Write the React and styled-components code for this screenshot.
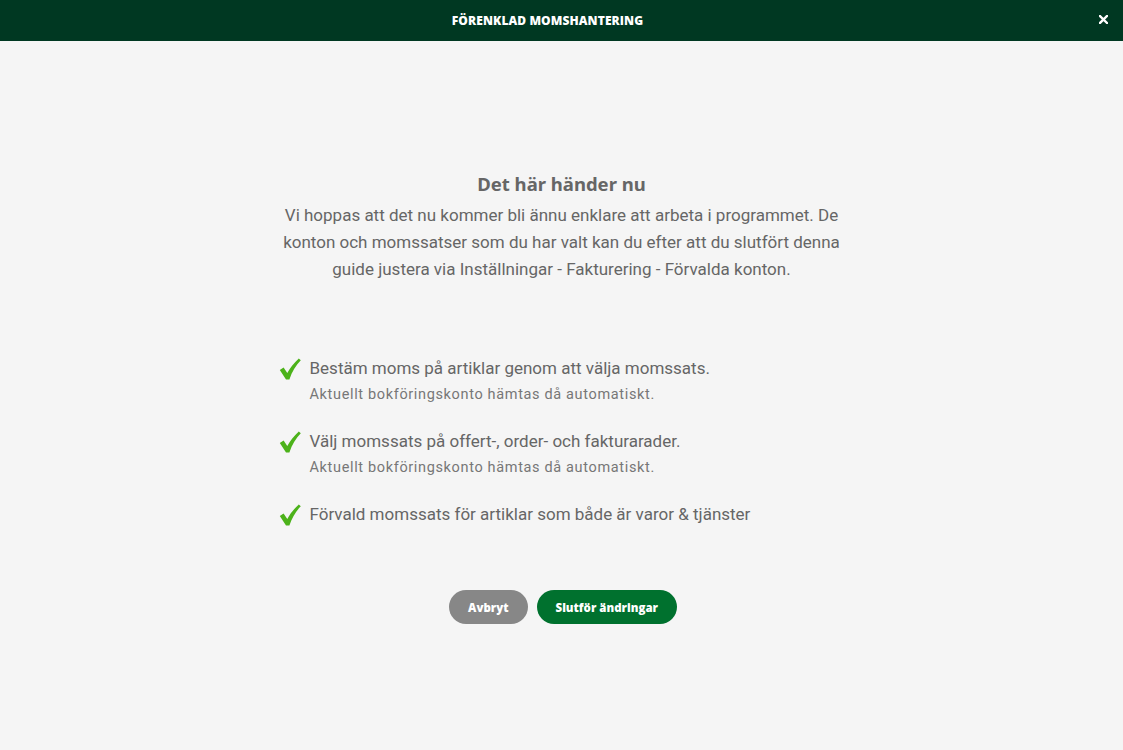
import React from 'react';
import styled, { createGlobalStyle } from 'styled-components';

const GlobalStyle = createGlobalStyle`
  html, body {
    margin: 0;
    padding: 0;
    background: #f5f5f5;
  }
  body {
    font-family: Roboto, "Liberation Sans", Arial, sans-serif;
  }
`;

const Page = styled.div`
  min-height: 750px;
  display: flex;
  flex-direction: column;
  background: #f5f5f5;
`;

const TopBar = styled.header`
  height: 41px;
  background: #003822;
  display: flex;
  align-items: center;
  justify-content: center;
  padding-right: 28px;
  position: relative;
`;

const Title = styled.h1`
  margin: 0;
  color: #fff;
  font-family: "Open Sans", "Noto Sans", sans-serif;
  font-weight: 800;
  font-size: 12px;
  letter-spacing: 0.1px;
  text-transform: uppercase;
`;

const CloseButton = styled.button`
  position: absolute;
  right: 13px;
  top: 12px;
  width: 14px;
  height: 14px;
  padding: 0;
  border: none;
  background: none;
  cursor: pointer;
  display: flex;
  align-items: center;
  justify-content: center;
`;

const Main = styled.main`
  display: flex;
  flex-direction: column;
  align-items: center;
  padding-top: 131px;
`;

const Content = styled.div`
  width: 566px;
  display: flex;
  flex-direction: column;
`;

const Heading = styled.h2`
  margin: 0 0 6px;
  text-align: center;
  font-family: "Noto Sans", "Open Sans", sans-serif;
  font-weight: 700;
  font-size: 18.5px;
  line-height: 24px;
  color: #666;
`;

const Intro = styled.p`
  margin: 0;
  text-align: center;
  font-size: 17px;
  line-height: 27px;
  color: #666;
`;

const Checklist = styled.ul`
  list-style: none;
  margin: 73px 0 0;
  padding: 0;
  display: flex;
  flex-direction: column;
  gap: 24px;
`;

const Item = styled.li`
  display: flex;
  align-items: flex-start;
`;

const CheckMark = styled.span`
  width: 31px;
  flex-shrink: 0;
  padding-top: 2px;
  display: flex;
`;

const ItemText = styled.div`
  display: flex;
  flex-direction: column;
  gap: 5px;
`;

const MainLine = styled.span`
  font-size: 17px;
  line-height: 24px;
  color: #666;
`;

const SubLine = styled.span`
  font-size: 14.5px;
  letter-spacing: 0.65px;
  line-height: 20px;
  color: #777;
`;

const Actions = styled.div`
  margin-top: 64px;
  display: flex;
  justify-content: center;
  gap: 9px;
  padding-left: 3px;
`;

const Button = styled.button`
  height: 34px;
  border: none;
  border-radius: 17px;
  padding: 0 19px;
  background: ${p => (p.$primary ? '#00712e' : '#878787')};
  color: #fff;
  font-family: "Open Sans", "Noto Sans", sans-serif;
  font-weight: 800;
  font-size: 11.5px;
  cursor: pointer;
`;

const Check = () => (
  <svg width="22" height="22" viewBox="0 0 22 22">
    <path
      d="M0.8 12 L4.6 9.4 L8.3 15 C11 9.8 15 4.8 19.8 0.4 L21.8 2.2 C17 7.2 13 13.6 10.4 21.4 L7 21.4 Z"
      fill="#4cb21a"
    />
  </svg>
);

const items = [
  {
    text: 'Bestäm moms på artiklar genom att välja momssats.',
    sub: 'Aktuellt bokföringskonto hämtas då automatiskt.',
  },
  {
    text: 'Välj momssats på offert-, order- och fakturarader.',
    sub: 'Aktuellt bokföringskonto hämtas då automatiskt.',
  },
  {
    text: 'Förvald momssats för artiklar som både är varor & tjänster',
  },
];

export default function App() {
  return (
    <>
      <GlobalStyle />
      <Page>
        <TopBar>
          <Title>Förenklad momshantering</Title>
          <CloseButton aria-label="Stäng">
            <svg width="9" height="9" viewBox="0 0 9 9">
              <path d="M1 1 L8 8 M8 1 L1 8" stroke="#fff" strokeWidth="2.4" strokeLinecap="square" />
            </svg>
          </CloseButton>
        </TopBar>
        <Main>
          <Content>
            <Heading>Det här händer nu</Heading>
            <Intro>
              Vi hoppas att det nu kommer bli ännu enklare att arbeta i programmet. De konton och
              momssatser som du har valt kan du efter att du slutfört denna guide justera via
              Inställningar - Fakturering - Förvalda konton.
            </Intro>
            <Checklist>
              {items.map(item => (
                <Item key={item.text}>
                  <CheckMark>
                    <Check />
                  </CheckMark>
                  <ItemText>
                    <MainLine>{item.text}</MainLine>
                    {item.sub && <SubLine>{item.sub}</SubLine>}
                  </ItemText>
                </Item>
              ))}
            </Checklist>
            <Actions>
              <Button>Avbryt</Button>
              <Button $primary>Slutför ändringar</Button>
            </Actions>
          </Content>
        </Main>
      </Page>
    </>
  );
}
